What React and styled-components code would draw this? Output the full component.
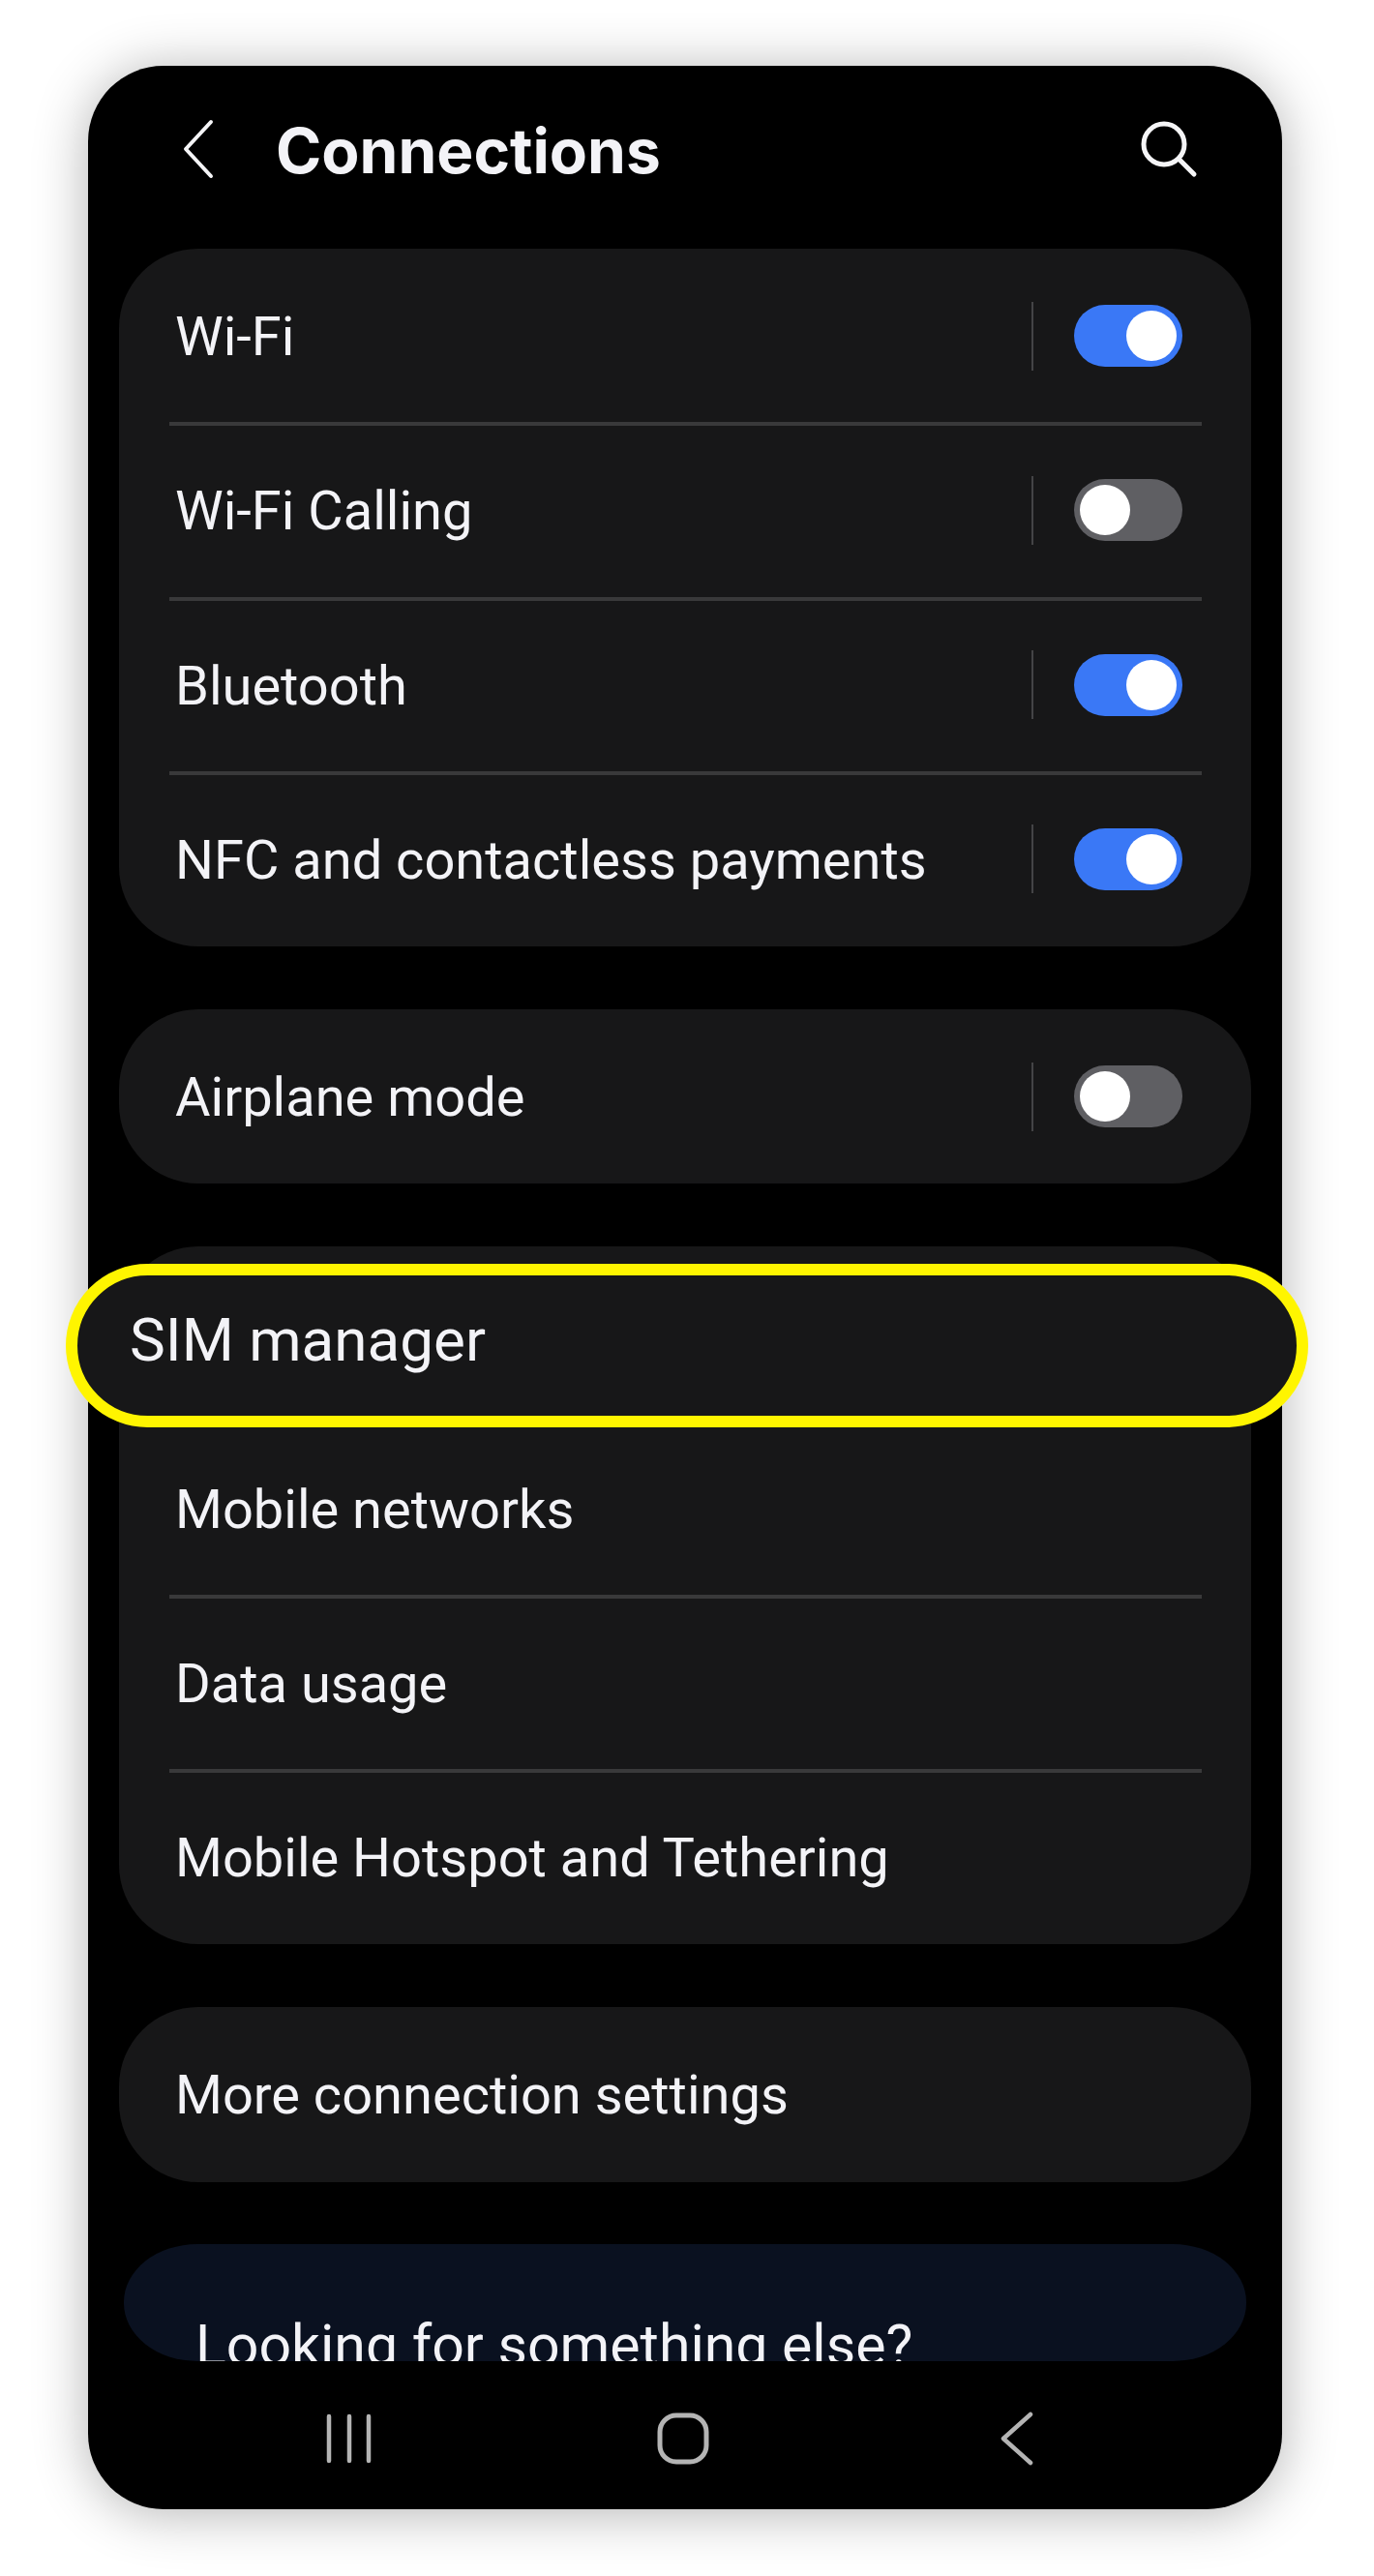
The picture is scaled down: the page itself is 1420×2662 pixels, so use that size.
import React from "react";
import styled, { createGlobalStyle } from "styled-components";

const GlobalStyle = createGlobalStyle`
  html, body {
    margin: 0;
    padding: 0;
    background: #ffffff;
  }
`;

const Page = styled.div`
  width: 1420px;
  height: 2662px;
  box-sizing: border-box;
  padding: 68px 95px 0 91px;
  font-family: Roboto, "Liberation Sans", sans-serif;
  color: #f3f3f7;
`;

const Phone = styled.div`
  width: 1234px;
  height: 2525px;
  background: #000000;
  border-radius: 78px;
  box-shadow: 0 4px 56px rgba(0, 0, 0, 0.3);
  display: flex;
  flex-direction: column;
`;

const Header = styled.header`
  height: 189px;
  box-sizing: border-box;
  padding: 0 86px 17px 96px;
  display: flex;
  align-items: center;
  flex-shrink: 0;
`;

const Title = styled.h1`
  margin: 3px 0 0 62px;
  font-family: Inter, Roboto, sans-serif;
  font-size: 64px;
  font-weight: 700;
  flex: 1;
`;

const Content = styled.main`
  flex: 1;
  padding: 0 32px;
  display: flex;
  flex-direction: column;
  gap: 65px;
`;

const Card = styled.section`
  background: #171718;
  border-radius: 82px;
`;

const Row = styled.div`
  position: relative;
  height: 180.25px;
  box-sizing: border-box;
  margin: 0 51px 0 52px;
  padding: 0 20px 0 6px;
  display: flex;
  align-items: center;

  &::after {
    content: "";
    display: ${(p) => (p.$last ? "none" : "block")};
    position: absolute;
    left: 0;
    right: 0;
    bottom: -3px;
    height: 4px;
    background: #39393a;
  }
`;

const Label = styled.span`
  flex: 1;
  padding-top: 2px;
  font-size: 56px;
`;

const Divider = styled.span`
  width: 2px;
  height: 71px;
  background: #444446;
  margin-right: 42px;
`;

const Track = styled.span`
  width: 112px;
  height: 64px;
  box-sizing: border-box;
  padding: 6px;
  border-radius: 32px;
  background: ${(p) => (p.$on ? "#3a78f6" : "#5f5f63")};
  display: flex;
  justify-content: ${(p) => (p.$on ? "flex-end" : "flex-start")};
`;

const Knob = styled.span`
  width: 52px;
  height: 52px;
  border-radius: 50%;
  background: #ffffff;
`;

/* yellow callout sits over the first row of the SIM card and spills past the phone edge */
const Callout = styled.div`
  position: absolute;
  top: 18px;
  left: -107px;
  right: -110px;
  height: 169px;
  box-sizing: border-box;
  border: 12px solid #fff500;
  border-radius: 85px;
  background: #171718;
  padding: 0 0 12px 54px;
  display: flex;
  align-items: center;
  font-size: 62px;
  z-index: 1;
`;

const HelpCard = styled.section`
  margin: -1px 5px 0;
  height: 121px;
  box-sizing: border-box;
  padding: 73px 0 0 74px;
  overflow: hidden;
  background: #0a1120;
  border-radius: 76px / 60px;
  font-size: 59px;
  line-height: 64px;
  flex-shrink: 0;
`;

const NavBar = styled.nav`
  height: 154px;
  box-sizing: border-box;
  padding: 6px 4px 0 0;
  display: grid;
  grid-template-columns: repeat(3, 345px);
  justify-content: center;
  justify-items: center;
  align-items: center;
  flex-shrink: 0;
`;

const BackIcon = () => (
  <svg width="36" height="62" viewBox="0 0 36 62" fill="none" stroke="#f5f5f7" strokeWidth="4" strokeLinecap="round" strokeLinejoin="round">
    <path d="M31 3 L5 31 L31 59" />
  </svg>
);

const SearchIcon = () => (
  <svg width="62" height="62" viewBox="0 0 62 62" fill="none" stroke="#f5f5f7" strokeWidth="5" strokeLinecap="round">
    <circle cx="26" cy="26" r="21" />
    <path d="M42 42 L57 57" />
  </svg>
);

const RecentsIcon = () => (
  <svg width="50" height="52" viewBox="0 0 50 52" fill="none" stroke="#b4b4b4" strokeWidth="4.5" strokeLinecap="round">
    <path d="M4 3 V49 M25 3 V49 M45 3 V49" />
  </svg>
);

const HomeIcon = () => (
  <svg width="54" height="54" viewBox="0 0 54 54" fill="none" stroke="#b4b4b4" strokeWidth="5">
    <rect x="3" y="3" width="48" height="48" rx="17" />
  </svg>
);

const NavBackIcon = () => (
  <svg width="36" height="56" viewBox="0 0 36 56" fill="none" stroke="#b4b4b4" strokeWidth="4.5" strokeLinecap="round" strokeLinejoin="round">
    <path d="M32 3 L4 28 L32 53" />
  </svg>
);

const Toggle = ({ on }) => (
  <>
    <Divider />
    <Track $on={on}>
      <Knob />
    </Track>
  </>
);

const ToggleCard = ({ items }) => (
  <Card>
    {items.map((item, i) => (
      <Row key={item.name} $last={i === items.length - 1}>
        <Label>{item.name}</Label>
        <Toggle on={item.on} />
      </Row>
    ))}
  </Card>
);

const radios = [
  { name: "Wi-Fi", on: true },
  { name: "Wi-Fi Calling", on: false },
  { name: "Bluetooth", on: true },
  { name: "NFC and contactless payments", on: true },
];

const App = () => (
  <Page>
    <GlobalStyle />
    <Phone>
      <Header>
        <BackIcon />
        <Title>Connections</Title>
        <SearchIcon />
      </Header>
      <Content>
        <ToggleCard items={radios} />
        <ToggleCard items={[{ name: "Airplane mode", on: false }]} />
        <Card>
          <Row>
            <Callout>SIM manager</Callout>
          </Row>
          <Row>
            <Label>Mobile networks</Label>
          </Row>
          <Row>
            <Label>Data usage</Label>
          </Row>
          <Row $last>
            <Label>Mobile Hotspot and Tethering</Label>
          </Row>
        </Card>
        <Card>
          <Row $last>
            <Label>More connection settings</Label>
          </Row>
        </Card>
        <HelpCard>Looking for something else?</HelpCard>
      </Content>
      <NavBar>
        <RecentsIcon />
        <HomeIcon />
        <NavBackIcon />
      </NavBar>
    </Phone>
  </Page>
);

export default App;
